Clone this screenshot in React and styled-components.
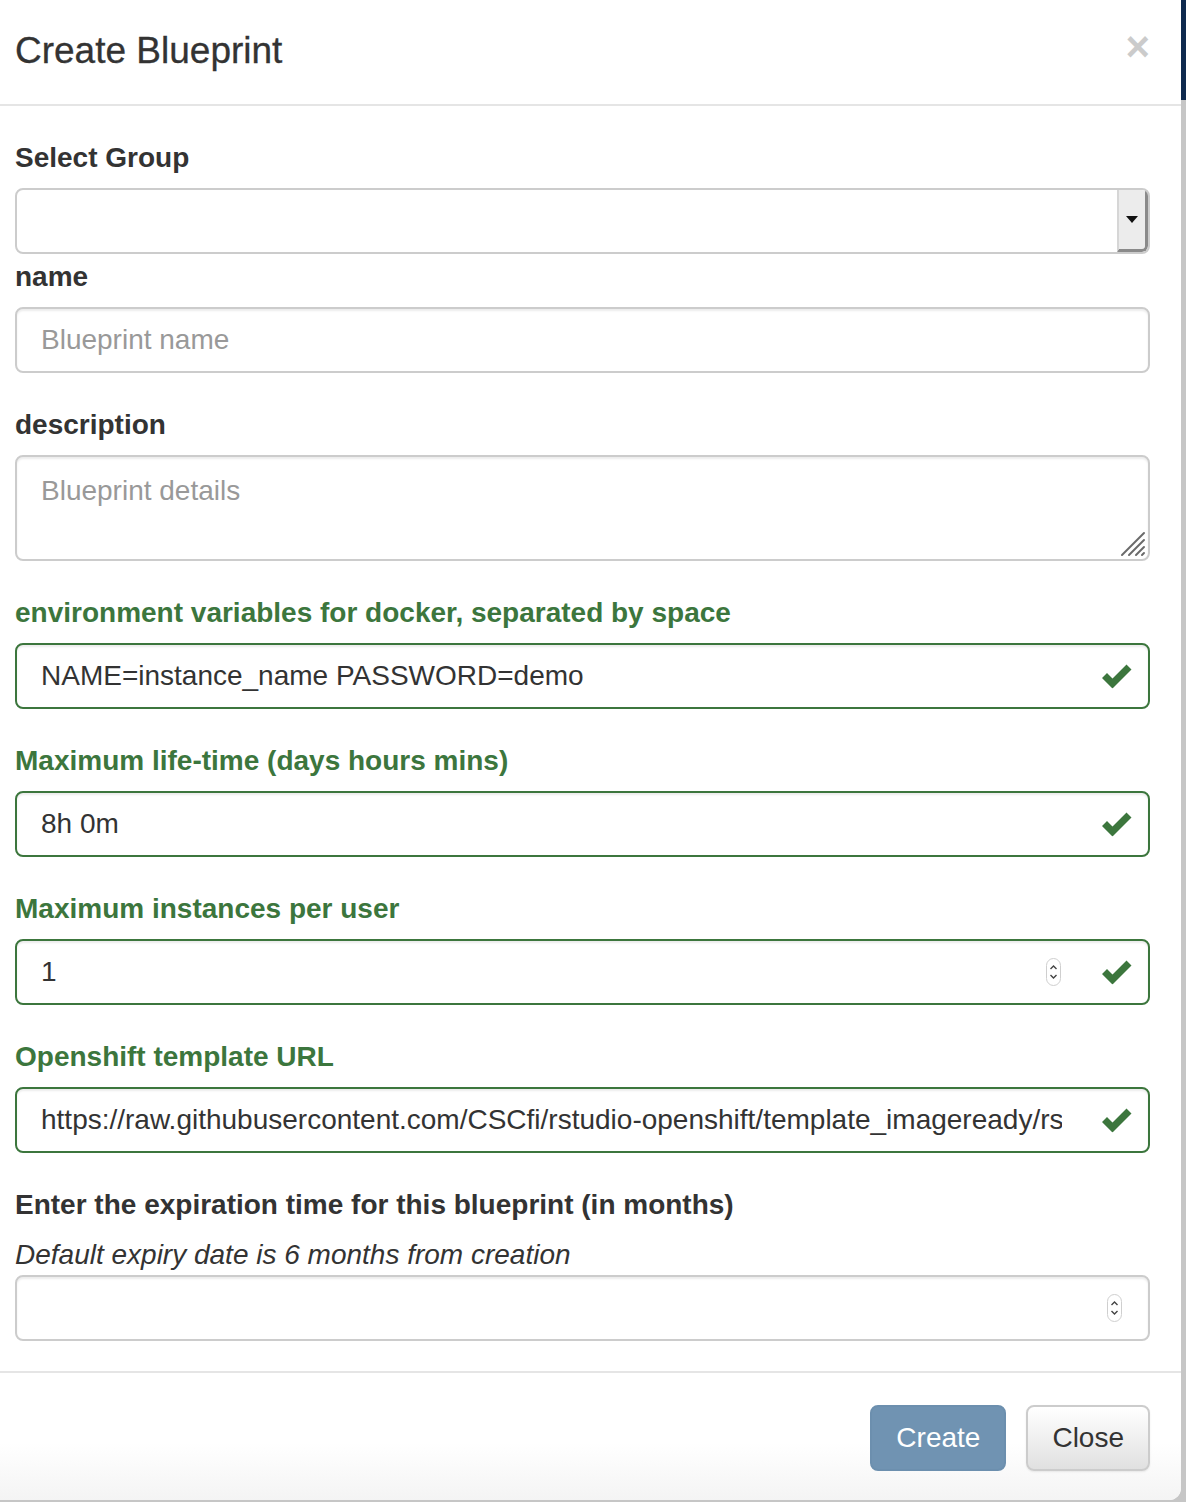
import React from 'react'
import styled, { createGlobalStyle } from 'styled-components'

const GlobalStyle = createGlobalStyle`
  html, body {
    margin: 0;
    padding: 0;
    background: #c6c6c6;
  }
  body {
    font-family: "Liberation Sans", Arial, Helvetica, sans-serif;
    color: #333;
  }
`

const Page = styled.div`
  display: flex;
  width: 1186px;
  height: 1502px;
  overflow: hidden;
  background: #c6c6c6;
`

const Backdrop = styled.div`
  flex: 1;
  display: flex;
  flex-direction: column;
  .navbar{
    height: 100px;
    background: #0f2a4e;
  }
`

const Modal = styled.div`
  width: 1181px;
  height: 1500px;
  background: #fff;
  border-bottom-right-radius: 12px;
  display: flex;
  flex-direction: column;
  overflow: hidden;
`

const Header = styled.header`
  display: flex;
  align-items: center;
  justify-content: space-between;
  height: 104px;
  padding: 0 31px 0 15px;
  border-bottom: 2px solid #e5e5e5;
  h4{
    margin: 0;
    font-size: 37px;
    font-weight: 400;
    line-height: 40px;
    color: #333;
    padding-bottom: 2px;
    -webkit-text-stroke: 0.3px #333;
  }
`

const CloseX = styled.button`
  border: 0;
  background: none;
  padding: 0;
  margin: 0 0 10px 0;
  font-family: "Liberation Sans", Arial, sans-serif;
  font-size: 42px;
  font-weight: 700;
  line-height: 1;
  color: #000;
  opacity: 0.2;
`

const Body = styled.div`
  padding: 32px 31px 30px 15px;
  display: flex;
  flex-direction: column;
`

const Group = styled.div`
  display: flex;
  flex-direction: column;
  margin-bottom: ${p => p.$gap ?? 32}px;
`

const Label = styled.label`
  font-size: 28px;
  font-weight: 700;
  line-height: 40px;
  margin-bottom: 10px;
  color: ${p => (p.$ok ? '#3c763d' : '#333')};
`

const Help = styled.div`
  font-size: 28px;
  font-style: italic;
  line-height: 40px;
  color: #333;
`

const Field = styled.div`
  position: relative;
  display: flex;
`

const Input = styled.input`
  box-sizing: border-box;
  width: 100%;
  height: 66px;
  border: 2px solid ${p => (p.$ok ? '#3c763d' : '#ccc')};
  border-radius: 8px;
  padding: 0 ${p => (p.$ok ? 86 : 24)}px 0 24px;
  font-family: "Liberation Sans", Arial, sans-serif;
  font-size: 28px;
  color: #333;
  background: #fff;
  box-shadow: inset 0 2px 2px rgba(0,0,0,.075);
  outline: none;
  &::placeholder{
    color: #999;
  }
`

const TextArea = styled.textarea`
  box-sizing: border-box;
  width: 100%;
  height: 106px;
  border: 2px solid #ccc;
  border-radius: 8px;
  padding: 16px 24px;
  font-family: "Liberation Sans", Arial, sans-serif;
  font-size: 28px;
  line-height: 36px;
  color: #333;
  resize: none;
  box-shadow: inset 0 2px 2px rgba(0,0,0,.075);
  outline: none;
  &::placeholder{
    color: #999;
  }
`

const Grip = styled.span`
  position: absolute;
  right: 4px;
  bottom: 4px;
  display: flex;
`

const Select = styled.div`
  box-sizing: border-box;
  width: 100%;
  height: 66px;
  border: 2px solid #ccc;
  border-radius: 8px;
  background: #fff;
  display: flex;
  justify-content: flex-end;
  overflow: hidden;
`

const SelectButton = styled.div`
  width: 26px;
  background: #ececec;
  border-left: 2px solid #d6d6d6;
  border-right: 3px solid #8a8a8a;
  border-bottom: 3px solid #8a8a8a;
  border-bottom-right-radius: 6px;
  display: flex;
  align-items: center;
  justify-content: center;
  &:after{
    content: "";
    border-left: 6px solid transparent;
    border-right: 6px solid transparent;
    border-top: 7px solid #111;
  }
`

const Feedback = styled.span`
  position: absolute;
  right: 18px;
  top: 50%;
  transform: translateY(-50%);
  display: flex;
`

const Spinner = styled.span`
  position: absolute;
  right: ${p => p.$right}px;
  top: 50%;
  transform: translateY(-50%);
  box-sizing: border-box;
  width: 15px;
  height: 28px;
  border: 1px solid #cfcfcf;
  border-radius: 8px;
  background: #fff;
  display: flex;
  align-items: center;
  justify-content: center;
`

const Footer = styled.footer`
  flex: 1;
  border-top: 2px solid #e5e5e5;
  padding: 32px 31px 0 0;
  display: flex;
  justify-content: flex-end;
  align-items: flex-start;
  gap: 20px;
  background: linear-gradient(to bottom, #fff 55%, #f4f4f4 100%);
`

const Button = styled.button`
  box-sizing: border-box;
  height: 66px;
  padding: 0 24px;
  border-radius: 8px;
  font-family: "Liberation Sans", Arial, sans-serif;
  font-size: 28px;
  line-height: 1;
  border: 2px solid ${p => (p.$primary ? '#6c8fae' : '#ccc')};
  color: ${p => (p.$primary ? '#fff' : '#333')};
  background: ${p => (p.$primary ? '#7093b2' : 'linear-gradient(to bottom, #fff 0%, #e0e0e0 100%)')};
  box-shadow: ${p => (p.$primary ? 'none' : '0 1px 2px rgba(0,0,0,.08)')};
`

function Check() {
  return (
    <svg width="30" height="25" viewBox="0 0 30 25">
      <path d="M0 14.5 L5 9.5 L10.5 15 L24.5 1 L29.5 6 L10.5 25 Z" fill="#3c763d" />
    </svg>
  )
}

function SpinIcon() {
  return (
    <svg width="9" height="18" viewBox="0 0 9 18">
      <path d="M1.5 6 L4.5 3 L7.5 6" stroke="#444" strokeWidth="1.4" fill="none" />
      <path d="M1.5 12 L4.5 15 L7.5 12" stroke="#444" strokeWidth="1.4" fill="none" />
    </svg>
  )
}

function GripIcon() {
  return (
    <svg width="26" height="26" viewBox="0 0 26 26">
      <g stroke="#6a6a6a" strokeWidth="2" strokeLinecap="round">
        <line x1="2" y1="24" x2="24" y2="2" />
        <line x1="9" y1="24" x2="24" y2="9" />
        <line x1="16" y1="24" x2="24" y2="16" />
        <line x1="22" y1="24" x2="24" y2="22" />
      </g>
    </svg>
  )
}

const fields = [
  { label: 'environment variables for docker, separated by space', value: 'NAME=instance_name PASSWORD=demo' },
  { label: 'Maximum life-time (days hours mins)', value: '8h 0m' },
  { label: 'Maximum instances per user', value: '1', spin: true },
  { label: 'Openshift template URL', value: 'https://raw.githubusercontent.com/CSCfi/rstudio-openshift/template_imageready/rstudio-template.yaml' },
]

export default function App() {
  return (
    <Page>
      <GlobalStyle />
      <Modal>
        <Header>
          <h4>Create Blueprint</h4>
          <CloseX>×</CloseX>
        </Header>
        <Body>
          <Group $gap={3}>
            <Label>Select Group</Label>
            <Select><SelectButton /></Select>
          </Group>
          <Group>
            <Label>name</Label>
            <Input placeholder="Blueprint name" />
          </Group>
          <Group>
            <Label>description</Label>
            <Field>
              <TextArea placeholder="Blueprint details" />
              <Grip><GripIcon /></Grip>
            </Field>
          </Group>
          {fields.map(f => (
            <Group key={f.label}>
              <Label $ok>{f.label}</Label>
              <Field>
                <Input $ok defaultValue={f.value} />
                {f.spin && <Spinner $right={89}><SpinIcon /></Spinner>}
                <Feedback><Check /></Feedback>
              </Field>
            </Group>
          ))}
          <Group $gap={0}>
            <Label>Enter the expiration time for this blueprint (in months)</Label>
            <Help>Default expiry date is 6 months from creation</Help>
            <Field>
              <Input />
              <Spinner $right={28}><SpinIcon /></Spinner>
            </Field>
          </Group>
        </Body>
        <Footer>
          <Button $primary>Create</Button>
          <Button>Close</Button>
        </Footer>
      </Modal>
      <Backdrop>
        <div className="navbar" />
      </Backdrop>
    </Page>
  )
}
